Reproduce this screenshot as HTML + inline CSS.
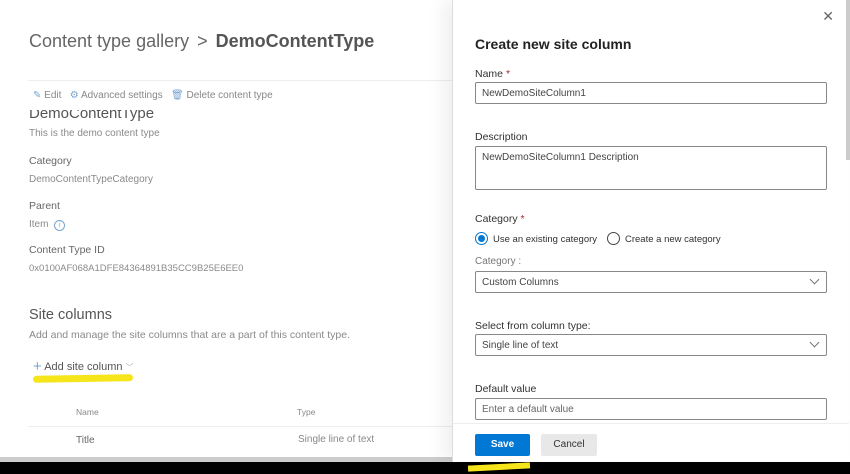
<!DOCTYPE html>
<html><head><style>
*{margin:0;padding:0;box-sizing:border-box}
body{width:850px;height:474px;overflow:hidden;background:#fff;font-family:"Liberation Sans",sans-serif;position:relative}
.a{position:absolute;white-space:nowrap}
.lab{font-size:10.5px;color:#666}
.val{font-size:10px;color:#8a8a8a}
.p{position:absolute;left:452px;top:0;width:396px;height:462px;background:#fff;border-left:1px solid #ddd;box-shadow:-10px 0 16px rgba(0,0,0,.06)}
.pl{font-size:10.5px;color:#323130}
.inp{position:absolute;left:22px;width:352px;height:22px;border:1px solid #8a8886;border-radius:2px;font-size:10px;color:#444;padding:5px 6px}
.chev{position:absolute;right:8px;top:4px;width:7px;height:7px;border-right:1px solid #777;border-bottom:1px solid #777;transform:rotate(45deg)}
</style></head><body>
<div class="a" style="left:29px;top:31px;font-size:18px;color:#666">Content type gallery <span style="margin:0 3px;font-weight:200">&gt;</span> <b style="color:#555">DemoContentType</b></div>
<div class="a" style="left:28px;top:80px;width:424px;height:1px;background:#eee"></div>
<div class="a" style="left:33px;top:90px;font-size:10px;color:#888"><span style="color:#7aa4cf">✎</span> Edit &nbsp; <span style="color:#7aa4cf">⚙</span> Advanced settings &nbsp; <span style="color:#7aa4cf">🗑</span> Delete content type</div>
<div class="a" style="left:29px;top:110px;height:12px;overflow:hidden;width:200px"><div style="position:absolute;top:-5px;font-size:15px;color:#555">DemoContentType</div></div>
<div class="a val" style="left:29px;top:128px">This is the demo content type</div>
<div class="a lab" style="left:29px;top:155px">Category</div>
<div class="a val" style="left:29px;top:174px">DemoContentTypeCategory</div>
<div class="a lab" style="left:29px;top:200px">Parent</div>
<div class="a val" style="left:29px;top:219px">Item <span style="display:inline-block;width:11px;height:11px;border:1px solid #7aa4cf;border-radius:50%;font-size:7px;text-align:center;color:#7aa4cf;line-height:9px;margin-left:3px">i</span></div>
<div class="a lab" style="left:29px;top:244px">Content Type ID</div>
<div class="a val" style="left:29px;top:263px;font-size:9.5px">0x0100AF068A1DFE84364891B35CC9B25E6EE0</div>
<div class="a" style="left:29px;top:307px;font-size:14.5px;color:#555">Site columns</div>
<div class="a val" style="left:29px;top:329px;font-size:10.5px">Add and manage the site columns that are a part of this content type.</div>
<div class="a" style="left:33px;top:358px;font-size:11px;color:#555"><span style="color:#7aa4cf;font-size:15px;vertical-align:-1px">+</span> Add site column <span style="color:#aaa;font-size:8px">﹀</span></div>
<div class="a" style="left:33px;top:375px;width:100px;height:7px;background:#f5e51a;border-radius:4px;transform:rotate(-1deg)"></div>
<div class="a" style="left:76px;top:407px;font-size:8.5px;color:#888">Name</div>
<div class="a" style="left:297px;top:407px;font-size:8.5px;color:#888">Type</div>
<div class="a" style="left:28px;top:426px;width:424px;height:1px;background:#eee"></div>
<div class="a" style="left:76px;top:435px;font-size:10px;color:#666">Title</div>
<div class="a" style="left:298px;top:434px;font-size:10px;color:#888">Single line of text</div>
<div class="a" style="left:0;top:457px;width:452px;height:5px;background:#ccc"></div>
<div class="p">
<div class="a" style="right:14px;top:8px;font-size:14px;color:#666">✕</div>
<div class="a" style="left:22px;top:36px;font-size:14px;font-weight:bold;color:#222">Create new site column</div>
<div class="a pl" style="left:22px;top:68px">Name <span style="color:#a4262c">*</span></div>
<div class="inp" style="top:82px">NewDemoSiteColumn1</div>
<div class="a pl" style="left:22px;top:131px">Description</div>
<div class="inp" style="top:146px;height:44px">NewDemoSiteColumn1 Description</div>
<div class="a pl" style="left:22px;top:213px">Category <span style="color:#a4262c">*</span></div>
<div class="a" style="left:22px;top:232px;width:13px;height:13px;border:1px solid #0078d4;border-radius:50%"><div style="margin:2px;width:7px;height:7px;border-radius:50%;background:#0078d4"></div></div>
<div class="a pl" style="left:40px;top:234px;font-size:9.5px">Use an existing category</div>
<div class="a" style="left:154px;top:232px;width:13px;height:13px;border:1px solid #444;border-radius:50%"></div>
<div class="a pl" style="left:172px;top:234px;font-size:9.5px">Create a new category</div>
<div class="a" style="left:22px;top:256px;font-size:10px;color:#777">Category :</div>
<div class="inp" style="top:271px">Custom Columns<div class="chev"></div></div>
<div class="a pl" style="left:22px;top:320px">Select from column type:</div>
<div class="inp" style="top:334px">Single line of text<div class="chev"></div></div>
<div class="a pl" style="left:22px;top:383px">Default value</div>
<div class="inp" style="top:398px;color:#666">Enter a default value</div>
<div class="a" style="left:0;top:423px;width:396px;height:1px;background:#eee"></div>
<div class="a" style="left:22px;top:434px;width:55px;height:22px;background:#0078d4;border-radius:2px;color:#fff;font-size:10px;font-weight:bold;text-align:center;line-height:22px">Save</div>
<div class="a" style="left:88px;top:434px;width:56px;height:22px;background:#e8e8e8;border-radius:2px;color:#333;font-size:10px;text-align:center;line-height:22px">Cancel</div>
</div>
<div class="a" style="left:846px;top:0;width:4px;height:160px;background:#ccc"></div>
<div class="a" style="left:0;top:462px;width:850px;height:12px;background:#000"></div>
<div class="a" style="left:468px;top:464px;width:62px;height:6px;background:#f5e51a;transform:rotate(-3deg)"></div>
</body></html>
